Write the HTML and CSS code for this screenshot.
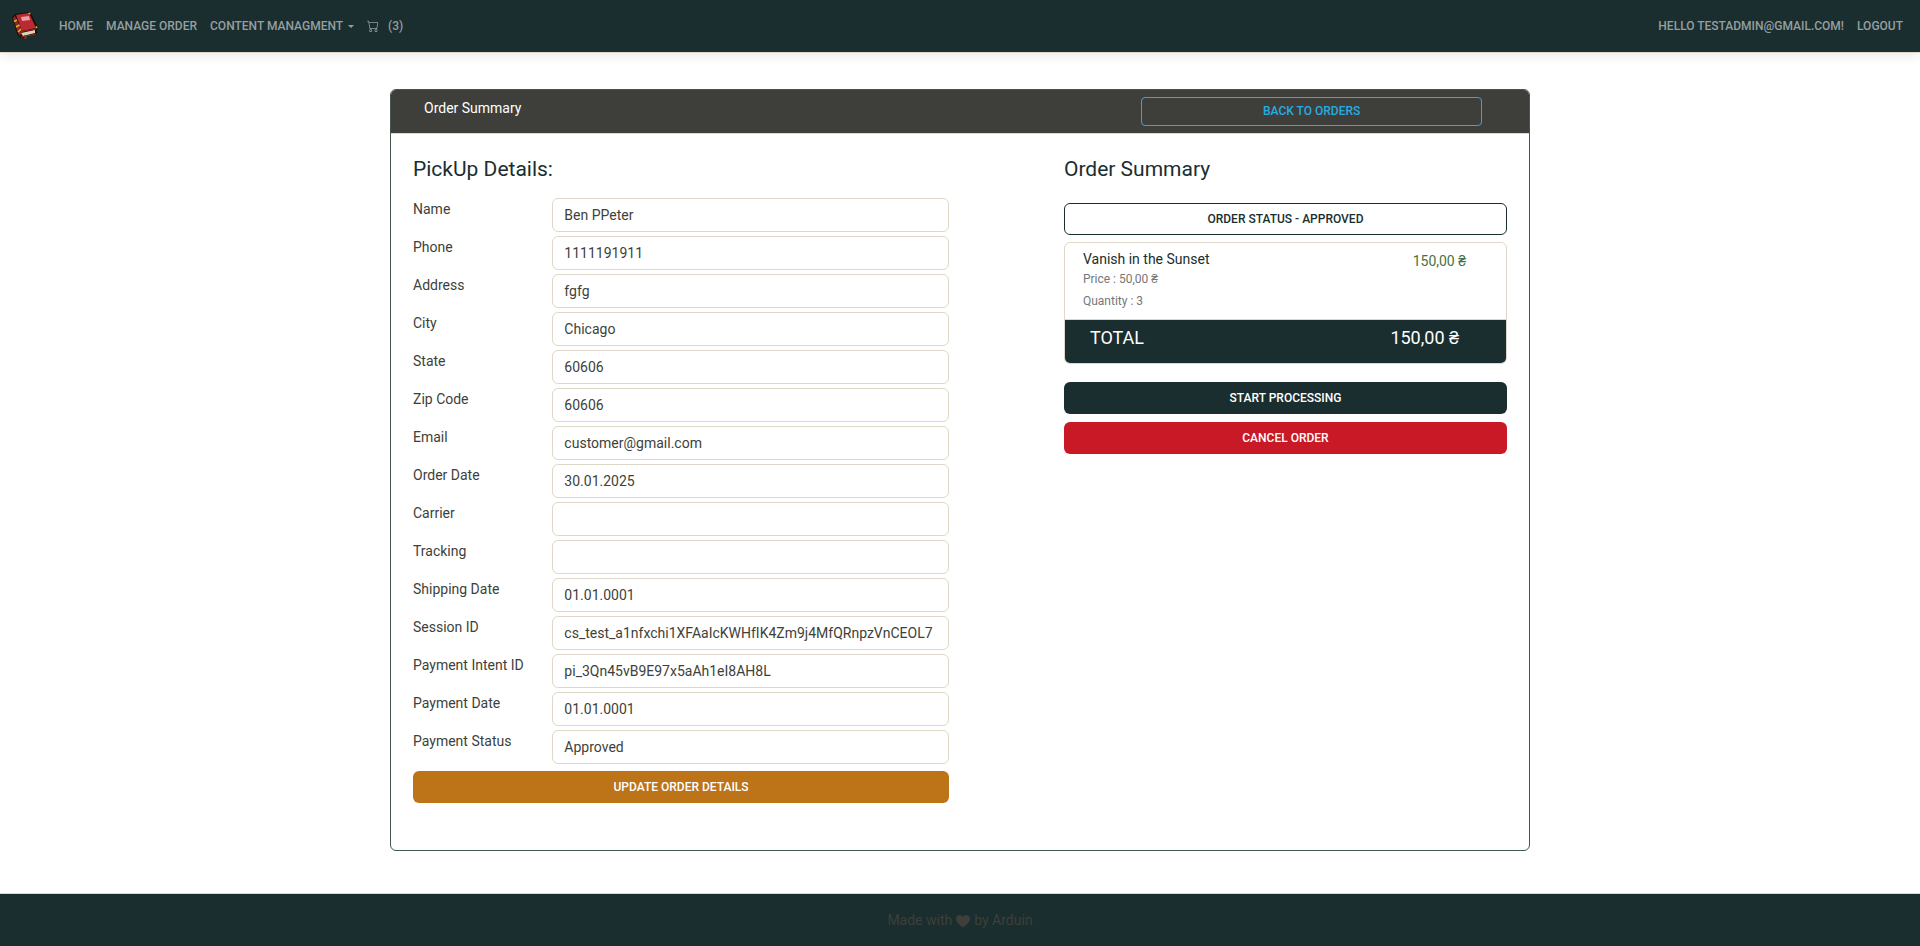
FILE: index.html
```html
<!DOCTYPE html>
<html lang="en">
<head>
<meta charset="utf-8">
<title>Order Summary</title>
<link rel="stylesheet" href="styles.css">
</head>
<body>
<header class="navbar">
  <a class="brand" href="#" aria-label="Book store">
    <svg width="28" height="28" viewBox="0 0 28 28">
      <path d="M1 5 4 2 18 0 20 1 27 16 26 18 26 22 16 24 15 27 13 26 9 26 6 22Z" fill="#1c0f0f"/>
      <path d="M2 6 4 4 11 19 9 24 7 21Z" fill="#96242a"/>
      <path d="M5 3 18 1 25 16 11 19Z" fill="#bb2a30"/>
      <path d="M10 21 24 18 24 21 12 24Z" fill="#d9d6ad"/>
      <path d="M9 20 11 19.500 25 17M10 25 25 22" stroke="#9c2228" stroke-width="1" fill="none"/>
      <path d="M10 5 18 4 19 8 11 9Z" fill="#eb9da4"/>
      <path d="M3 9.500 6 8M5 15 8.500 13M7 20 10 17M17.500 1.500h2M25 14.500l1 1.500" stroke="#dcb01f" stroke-width="1.600" fill="none"/>
      <path d="M14.500 23v4" stroke="#7a4424" stroke-width="2"/>
    </svg>
  </a>
  <nav class="nav-main">
    <a href="#">Home</a>
    <a href="#">Manage Order</a>
    <a class="dropdown" href="#">Content Managment</a>
    <a class="cart" href="#" aria-label="Cart, 3 items">
      <svg width="12" height="12" viewBox="0 0 16 16" fill="currentColor"><path d="M0 1.500A.5.5 0 0 1 .5 1H2a.5.5 0 0 1 .485.379L2.890 3H14.500a.5.5 0 0 1 .491.592l-1.500 8A.5.5 0 0 1 13 12H4a.5.5 0 0 1-.491-.408L2.010 3.607 1.610 2H.5a.5.5 0 0 1-.5-.5M3.102 4l1.313 7h8.170l1.313-7zM5 12a2 2 0 1 0 0 4 2 2 0 0 0 0-4m7 0a2 2 0 1 0 0 4 2 2 0 0 0 0-4m-7 1a1 1 0 1 1 0 2 1 1 0 0 1 0-2m7 0a1 1 0 1 1 0 2 1 1 0 0 1 0-2"/></svg>
      <span>(3)</span>
    </a>
  </nav>
  <nav class="nav-user">
    <a href="#">Hello testadmin@gmail.com!</a>
    <a href="#">Logout</a>
  </nav>
</header>
<main class="container">
  <form class="card">
    <div class="card-header">
      <span>Order Summary</span>
      <a class="btn btn-back" href="#">Back to Orders</a>
    </div>
    <div class="card-body">
      <section class="details">
        <h1>PickUp Details:</h1>
        <div class="field"><label for="name">Name</label><input id="name" type="text" value="Ben PPeter"></div>
        <div class="field"><label for="phone">Phone</label><input id="phone" type="text" value="1111191911"></div>
        <div class="field"><label for="address">Address</label><input id="address" type="text" value="fgfg"></div>
        <div class="field"><label for="city">City</label><input id="city" type="text" value="Chicago"></div>
        <div class="field"><label for="state">State</label><input id="state" type="text" value="60606"></div>
        <div class="field"><label for="zip">Zip Code</label><input id="zip" type="text" value="60606"></div>
        <div class="field"><label for="email">Email</label><input id="email" type="text" value="customer@gmail.com"></div>
        <div class="field"><label for="odate">Order Date</label><input id="odate" type="text" value="30.01.2025"></div>
        <div class="field"><label for="carrier">Carrier</label><input id="carrier" type="text" value=""></div>
        <div class="field"><label for="tracking">Tracking</label><input id="tracking" type="text" value=""></div>
        <div class="field"><label for="sdate">Shipping Date</label><input id="sdate" type="text" value="01.01.0001"></div>
        <div class="field"><label for="session">Session ID</label><input id="session" type="text" value="cs_test_a1nfxchi1XFAaIcKWHfIK4Zm9j4MfQRnpzVnCEOL7"></div>
        <div class="field"><label for="intent">Payment Intent ID</label><input id="intent" type="text" value="pi_3Qn45vB9E97x5aAh1eI8AH8L"></div>
        <div class="field"><label for="pdate">Payment Date</label><input id="pdate" type="text" value="01.01.0001"></div>
        <div class="field"><label for="pstatus">Payment Status</label><input id="pstatus" type="text" value="Approved"></div>
        <button class="btn btn-update" type="submit">Update Order Details</button>
      </section>
      <section class="summary">
        <h2>Order Summary</h2>
        <button class="btn btn-status" type="button">Order Status - Approved</button>
        <div class="order-list">
          <div class="item">
            <div>
              <h3>Vanish in the Sunset</h3>
              <p>Price : 50,00 ₴</p>
              <p>Quantity : 3</p>
            </div>
            <span class="amount">150,00 ₴</span>
          </div>
          <div class="total"><span>TOTAL</span><span>150,00 ₴</span></div>
        </div>
        <button class="btn btn-start" type="button">Start Processing</button>
        <button class="btn btn-cancel" type="button">Cancel Order</button>
      </section>
    </div>
  </form>
</main>
<footer class="footer">
  <span>Made with</span>
  <svg width="14" height="14" viewBox="0 0 16 16" fill="currentColor"><path d="M4 1c2.200 0 3.500 1.200 4 2.300C8.500 2.200 9.800 1 12 1c2.300 0 4 2 4 4.500 0 4-4 7-8 10-4-3-8-6-8-10C0 3 1.700 1 4 1"/></svg>
  <span>by Arduin</span>
</footer>
</body>
</html>
```
FILE: styles.css
```css
* { box-sizing: border-box; }
body {
  margin: 0;
  min-height: 100vh;
  display: flex;
  flex-direction: column;
  background: #fff;
  color: #3e3f3a;
  font: 14px/21px Roboto, sans-serif;
}
h1, h2, h3, p { margin: 0; font-weight: 400; }

.navbar {
  display: flex;
  align-items: center;
  height: 53px;
  padding: 0 17px 0 11px;
  background: #1a2e2f;
  border-bottom: 1px solid #dfd7ca;
  box-shadow: 0 2px 12px rgba(0, 0, 0, 0.1);
}
.navbar a {
  color: #969fa0;
  font-size: 12px;
  line-height: 18px;
  font-weight: 500;
  text-transform: uppercase;
  text-decoration: none;
}
.brand { display: flex; margin-right: 20px; }
.nav-main, .nav-user { display: flex; gap: 13px; }
.nav-user { margin-left: auto; }
.dropdown { display: flex; align-items: center; gap: 5px; }
.dropdown::after {
  content: "";
  border: 3px solid transparent;
  border-top-color: currentColor;
  border-bottom: 0;
}
.cart { display: flex; align-items: center; gap: 9px; }

.container {
  width: 100%;
  max-width: 1140px;
  margin: 36px auto 42px;
}
.card {
  border: 1px solid #40594a;
  border-radius: 6px;
  overflow: hidden;
}
.card-header {
  display: flex;
  align-items: flex-start;
  justify-content: space-between;
  padding: 7px 47px 7px 33px;
  background: #3e3f3a;
  border-bottom: 1px solid #dfd7ca;
  color: #fff;
}
.card-header span { padding-top: 1px; }
.card-body {
  display: flex;
  justify-content: space-between;
  padding: 22px 22px 47px;
}
.details { width: 49%; }
.summary { width: 40.5%; }
h1, h2 {
  color: #1a2e2f;
  font-size: 21px;
  line-height: 26px;
}
h1 { margin-bottom: 16px; }
h2 { margin-bottom: 21px; }

.btn {
  display: block;
  width: 100%;
  padding: 6px 12px;
  border: 1px solid transparent;
  border-radius: 6px;
  font: 500 12px/18px Roboto, sans-serif;
  text-align: center;
  text-decoration: none;
  text-transform: uppercase;
  color: #fff;
}
.btn-back {
  width: 32.2%;
  padding: 4px 8px 5px;
  border-color: #29abe0;
  border-radius: 4px;
  color: #29abe0;
}
.btn-update { margin-top: 7px; background: #bd7318; }
.btn-status { background: #fff; border-color: #1a2e2f; color: #1a2e2f; }
.btn-start { margin-top: 18px; background: #1a2e2f; }
.btn-cancel { margin-top: 8px; background: #c91926; }

.field {
  display: grid;
  grid-template-columns: 26% 74%;
  align-items: start;
  margin-bottom: 4px;
}
.field label { padding-top: 1px; }
.field input {
  width: 100%;
  height: 34px;
  padding: 6px 11px;
  border: 1px solid #dfd7ca;
  border-radius: 6px;
  background: #fff;
  color: #3e3f3a;
  font: 14px/20px Roboto, sans-serif;
}
.order-list {
  margin-top: 7px;
  border: 1px solid #dfd7ca;
  border-radius: 6px;
  overflow: hidden;
}
.item {
  display: flex;
  justify-content: space-between;
  padding: 7px 40px 7px 18px;
}
.item h3 { color: #1a2e2f; font-size: 14px; line-height: 18px; }
.item p { color: #777; font-size: 12px; line-height: 22px; }
.amount { padding-top: 1px; color: #4a7043; }
.total {
  display: flex;
  justify-content: space-between;
  min-height: 44px;
  padding: 7px 47px 7px 25px;
  border-top: 1px solid #dfd7ca;
  background: #1a2e2f;
  color: #fff;
  font-size: 18px;
}
.footer {
  display: flex;
  align-items: center;
  justify-content: center;
  gap: 4px;
  height: 54px;
  margin-top: auto;
  background: #1a2e2f;
  border-top: 1px solid #dfd7ca;
  color: #3e3f3a;
}
```
